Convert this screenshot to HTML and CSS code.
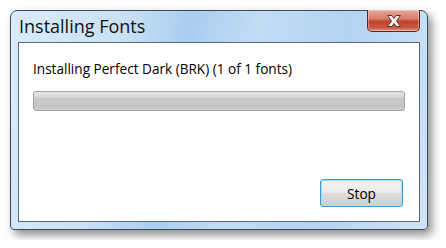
FILE: index.html
```html
<!DOCTYPE html>
<html lang="en">
<head>
  <meta charset="UTF-8">
  <title>Installing Fonts</title>
  <link rel="stylesheet" href="styles.css">
</head>
<body>
  <div class="window">
    <div class="titlebar">
      <span class="title">Installing Fonts</span>
      <button class="close-btn" aria-label="Close">
        <svg width="16" height="12" viewBox="0 0 16 12">
          <path d="M1.5 0.5 H6 L8 3.5 L10 0.5 H14.5 L10.5 6 L14.5 11.5 H10 L8 8.5 L6 11.5 H1.5 L5.5 6 Z" fill="#f2f2f2" stroke="#5e3430" stroke-width="1" stroke-linejoin="round"/>
        </svg>
      </button>
    </div>
    <div class="client">
      <p class="message">Installing Perfect Dark (BRK) (1 of 1 fonts)</p>
      <div class="progress"></div>
      <div class="actions">
        <button class="stop-btn">Stop</button>
      </div>
    </div>
  </div>
</body>
</html>
```

FILE: styles.css
```css
/* Page */
body {
  margin: 0;
  padding: 10px;
  background: #ffffff;
  font-family: 'Open Sans', 'Noto Sans', sans-serif;
}

/* Window frame (Aero glass) */
.window {
  width: 416px;
  height: 218px;
  border: 1px solid #3f4a57;
  border-radius: 7px 7px 4px 4px;
  background: linear-gradient(100deg, #d9ebf9 0%, #c9e1f6 25%, #a9cdef 40%, #c2dcf4 55%, #b3d3f1 75%, #cfe4f7 100%);
  box-shadow: 4px 5px 10px rgba(0, 0, 0, 0.45);
  display: flex;
  flex-direction: column;
}

.titlebar {
  height: 31px;
  display: flex;
  align-items: flex-start;
  justify-content: space-between;
  padding-left: 8px;
}

.title {
  margin-top: 3px;
  font-size: 18px;
  line-height: 24px;
  color: #111111;
}

.close-btn {
  width: 53px;
  height: 22px;
  margin-top: -1px;
  margin-right: 7px;
  border: 1px solid #5a2420;
  border-top: none;
  border-radius: 0 0 5px 5px;
  background: linear-gradient(#e8a597 0%, #d9816f 40%, #c0412c 55%, #c75a45 85%, #e59a84 100%);
  box-shadow: inset 0 0 0 1px rgba(255, 255, 255, 0.35);
  display: flex;
  align-items: center;
  justify-content: center;
  padding: 0;
}

.client {
  flex: 1;
  margin: 0 7px 7px 7px;
  background: #ffffff;
  border: 1px solid #5b6a79;
  display: flex;
  flex-direction: column;
  padding: 0 14px 14px 14px;
}

.message {
  margin: 17px 0 0 0;
  font-size: 13.6px;
  line-height: 18px;
  color: #000000;
}

.progress {
  margin-top: 13px;
  height: 18px;
  border: 1px solid #a2a2a2;
  border-radius: 3px;
  background: linear-gradient(#e4e4e4 0%, #dadada 25%, #c9c9c9 35%, #c6c6c6 85%, #d2d2d2 100%);
}

.actions {
  margin-top: auto;
  display: flex;
  justify-content: flex-end;
  padding-right: 2px;
}

.stop-btn {
  width: 83px;
  height: 28px;
  border: 1px solid #3c98d7;
  border-radius: 3px;
  background: linear-gradient(#f3f3f3 0%, #ebebeb 48%, #dddddd 52%, #cfcfcf 100%);
  box-shadow: inset 0 0 0 1px #a6e0f8;
  font-family: 'Open Sans', 'Noto Sans', sans-serif;
  font-size: 13.6px;
  color: #000000;
  padding: 0;
}
```
